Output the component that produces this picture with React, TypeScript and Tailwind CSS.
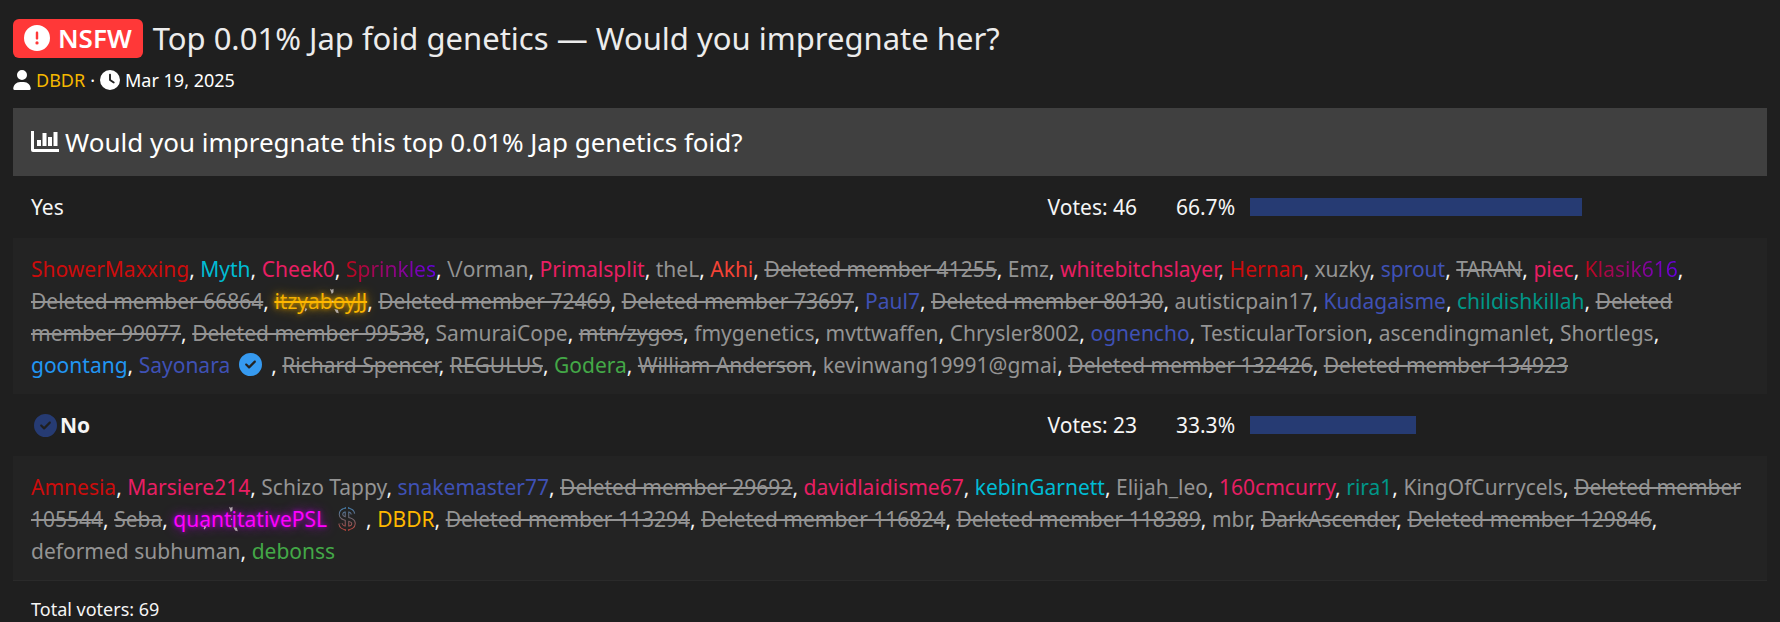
import { FaCircleCheck, FaCircleExclamation, FaClock, FaUser } from "react-icons/fa6";

type Voter = {
  name: string;
  tone?: keyof typeof TONES;
  struck?: boolean;
  icon?: "verified" | "dollar";
};

type PollOption = {
  label: string;
  votes: number;
  percentage: number;
  voted?: boolean;
  voters: Voter[];
};

const TONES = {
  member: "text-[#949494]",
  red: "text-[#cc0c0c]",
  cyan: "text-[#00bcd4]",
  pink: "text-[#e91e63]",
  tomato: "text-[#f44336]",
  indigo: "text-[#3f51b5]",
  teal: "text-[#009688]",
  green: "text-[#43a847]",
  blue: "text-[#2196f3]",
  amber: "text-[#ffb800]",
  fade: "bg-linear-to-r/srgb from-[#c00818] to-[#6200e0] bg-clip-text text-transparent",
  gold: "text-[#ffb800] [text-shadow:0_0_4px_#b88600,0_0_12px_#b88600]",
  magenta: "text-[#ff00ff] [text-shadow:0_0_4px_#a000c0,0_0_12px_#a000c0]",
};

const deleted = (id: number): Voter => ({ name: `Deleted member ${id}`, struck: true });

const OPTIONS: PollOption[] = [
  {
    label: "Yes",
    votes: 46,
    percentage: 66.7,
    voters: [
      { name: "ShowerMaxxing", tone: "red" },
      { name: "Myth", tone: "cyan" },
      { name: "Cheek0", tone: "pink" },
      { name: "Sprinkles", tone: "fade" },
      { name: "\\/orman" },
      { name: "Primalsplit", tone: "pink" },
      { name: "theL" },
      { name: "Akhi", tone: "tomato" },
      deleted(41255),
      { name: "Emz" },
      { name: "whitebitchslayer", tone: "pink" },
      { name: "Hernan", tone: "red" },
      { name: "xuzky" },
      { name: "sprout", tone: "indigo" },
      { name: "TARAN", struck: true },
      { name: "piec", tone: "pink" },
      { name: "Klasik616", tone: "fade" },
      deleted(66864),
      { name: "itzyaboyJJ", tone: "gold", struck: true },
      deleted(72469),
      deleted(73697),
      { name: "Paul7", tone: "indigo" },
      deleted(80130),
      { name: "autisticpain17" },
      { name: "Kudagaisme", tone: "indigo" },
      { name: "childishkillah", tone: "teal" },
      deleted(99077),
      deleted(99538),
      { name: "SamuraiCope" },
      { name: "mtn/zygos", struck: true },
      { name: "fmygenetics" },
      { name: "mvttwaffen" },
      { name: "Chrysler8002" },
      { name: "ognencho", tone: "indigo" },
      { name: "TesticularTorsion" },
      { name: "ascendingmanlet" },
      { name: "Shortlegs" },
      { name: "goontang", tone: "blue" },
      { name: "Sayonara", tone: "indigo", icon: "verified" },
      { name: "Richard Spencer", struck: true },
      { name: "REGULUS", struck: true },
      { name: "Godera", tone: "green" },
      { name: "William Anderson", struck: true },
      { name: "kevinwang19991@gmai" },
      deleted(132426),
      deleted(134923),
    ],
  },
  {
    label: "No",
    votes: 23,
    percentage: 33.3,
    voted: true,
    voters: [
      { name: "Amnesia", tone: "red" },
      { name: "Marsiere214", tone: "pink" },
      { name: "Schizo Tappy" },
      { name: "snakemaster77", tone: "indigo" },
      deleted(29692),
      { name: "davidlaidisme67", tone: "pink" },
      { name: "kebinGarnett", tone: "cyan" },
      { name: "Elijah_leo" },
      { name: "160cmcurry", tone: "pink" },
      { name: "rira1", tone: "teal" },
      { name: "KingOfCurrycels" },
      deleted(105544),
      { name: "Seba", struck: true },
      { name: "quantitativePSL", tone: "magenta", icon: "dollar" },
      { name: "DBDR", tone: "amber" },
      deleted(113294),
      deleted(116824),
      deleted(118389),
      { name: "mbr" },
      { name: "DarkAscender", struck: true },
      deleted(129846),
      { name: "deformed subhuman" },
      { name: "debonss", tone: "green" },
    ],
  },
];

function ChartIcon() {
  return (
    <svg viewBox="0 0 28 22" className="inline-block h-[22px] w-7" fill="currentColor" aria-hidden="true">
      <path d="M0 0h3v18h25v3H2a2 2 0 0 1-2-2z" />
      <path d="M6 9h4v6H6zM11.500 2h4v13h-4zM17 6h4v9h-4zM22.500 1h4v14h-4z" />
    </svg>
  );
}

function DollarIcon() {
  const path = "M10 1v24M16 8c-.5-2.500-2.500-4-6-4s-6 1.500-6 4.500 2.500 3.700 6 4.500 6.500 1.500 6.500 4.500-3 4.500-6.500 4.500-6-1.500-6.500-4.500";
  return (
    <svg viewBox="0 0 20 26" className="inline-block h-[26px] w-5" fill="none" aria-hidden="true">
      <defs>
        <linearGradient id="dollar-edge" gradientUnits="userSpaceOnUse" x1="10" y1="0" x2="10" y2="26">
          <stop offset="0" stopColor="#4088c0" />
          <stop offset="0.5" stopColor="#76656c" />
          <stop offset="1" stopColor="#d04438" />
        </linearGradient>
      </defs>
      <path d={path} stroke="url(#dollar-edge)" strokeWidth="4.500" />
      <path d={path} stroke="#232323" strokeWidth="2.500" />
    </svg>
  );
}

function Sparkles() {
  return (
    <svg
      viewBox="0 0 100 32"
      preserveAspectRatio="xMinYMid meet"
      className="pointer-events-none absolute inset-0 h-full w-full"
      fill="#d0c8c8"
      fillOpacity="0.8"
      aria-hidden="true"
    >
      <path d="M64 2l2 1 2-1v4l-2 2-1-3zM69 25l4 1 1 4-3-1zM36 24l2 1-2 3-1-1zM67 15l1 2h-2z" />
    </svg>
  );
}

function VoterName({ voter }: { voter: Voter }) {
  const tone = TONES[voter.tone ?? "member"];
  const glowing = voter.tone === "gold" || voter.tone === "magenta";
  return (
    <>
      <a
        href="#"
        className={`${tone} ${voter.struck ? "line-through decoration-2" : ""} ${glowing ? "relative" : ""}`}
      >
        {voter.name}
        {glowing && <Sparkles />}
      </a>
      {voter.icon === "verified" && (
        <span className="-my-1 mx-[9px] inline-block align-middle">
          <FaCircleCheck className="mb-1.5 size-[23px] text-[#369af0]" />
        </span>
      )}
      {voter.icon === "dollar" && (
        <span className="-my-1 mr-[9px] ml-2.5 inline-block h-[30px] align-middle leading-none">
          <DollarIcon />
        </span>
      )}
    </>
  );
}

function PollRow({ option }: { option: PollOption }) {
  return (
    <li>
      <div className="flex items-center py-[15px] pr-[19px] pl-[18px]">
        <h3 className={`flex flex-1 items-center ${option.voted ? "font-bold" : ""}`}>
          {option.voted && <FaCircleCheck className="mr-[3px] ml-[3px] size-[23px] text-[#263b73]" />}
          {option.label}
        </h3>
        <span>Votes: {option.votes}</span>
        <span className="w-[98px] text-right">{option.percentage}%</span>
        <div className="ml-[15px] w-[29%]">
          <div className="h-[18px] bg-[#263b73]" style={{ width: `${option.percentage}%` }} />
        </div>
      </div>
      <p className="bg-[#232323] px-[18px] pt-[15px] pb-[13px]">
        {option.voters.map((voter, i) => (
          <span key={voter.name}>
            <VoterName voter={voter} />
            {i < option.voters.length - 1 && ", "}
          </span>
        ))}
      </p>
    </li>
  );
}

export default function App() {
  return (
    <div className="min-h-screen bg-[#1f1f1f] px-[13px] pt-4 font-['Noto_Sans','Open_Sans',sans-serif] text-[21px] leading-8 text-[#f5f5f5]">
      <header>
        <h1 className="flex items-center gap-2.5 text-[31px] leading-[44px] text-[#ececec]">
          <span className="flex h-[39px] items-center gap-2 rounded-md bg-[#ff3838] px-[11px] text-[26px] font-semibold text-white">
            <FaCircleExclamation className="size-[26px]" />
            NSFW
          </span>
          Top 0.01% Jap foid genetics — Would you impregnate her?
        </h1>
        <div className="mt-1 flex items-center gap-[5px] text-[18px] text-white">
          <FaUser className="h-5 w-[18px]" />
          <a href="#" className="text-[#f5b800]">DBDR</a>
          <span>·</span>
          <FaClock className="size-5" />
          <time dateTime="2025-03-19">Mar 19, 2025</time>
        </div>
      </header>

      <section className="mt-3">
        <h2 className="flex items-center gap-1.5 bg-[#404040] px-[18px] py-[17px] text-[26px] leading-[34px] text-white">
          <ChartIcon />
          Would you impregnate this top 0.01% Jap genetics foid?
        </h2>
        <ul>
          {OPTIONS.map((option) => (
            <PollRow key={option.label} option={option} />
          ))}
        </ul>
        <footer className="border-t border-[#2a2a2a] px-[18px] pt-3 text-[18px]">Total voters: 69</footer>
      </section>
    </div>
  );
}
